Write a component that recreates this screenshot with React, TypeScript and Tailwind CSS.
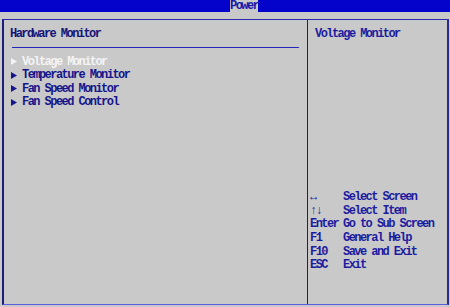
import React from "react";

const menuItems = [
  "Voltage Monitor",
  "Temperature Monitor",
  "Fan Speed Monitor",
  "Fan Speed Control",
];

const helpRows: [string, string][] = [
  ["↔", "Select Screen"],
  ["↑↓", "Select Item"],
  ["Enter", "Go to Sub Screen"],
  ["F1", "General Help"],
  ["F10", "Save and Exit"],
  ["ESC", "Exit"],
];

const font = "font-['Liberation_Mono','DejaVu_Sans_Mono',monospace] font-bold text-[12px] tracking-[-1.55px]";

export default function App() {
  return (
    <div className={`w-[450px] h-[307px] bg-[#c9c9c9] overflow-hidden ${font}`}>
      <div className="h-[12px] bg-[#0303cc] pl-[230px] flex">
        <div className="w-[28px] h-[12px] bg-[#c9c9c9] text-[#1616a8] leading-[12px] text-center">
          Power
        </div>
      </div>

      <div className="ml-[2px] mt-[7px] w-[447px] h-[286px] flex border-l-2 border-t border-r-2 border-b border-l-[#1c1c7c] border-t-[#2a2ab0] border-r-[#2a2a90] border-b-[#5c5ce0]">
        <div className="w-[303px] h-full pl-[6px] pr-[6px] pt-[6px]">
          <div className="text-[#141478] leading-[16px]">Hardware Monitor</div>
          <div className="mt-[5px] h-[1px] bg-[#2626b8] mx-[2px]"></div>
          <div className="mt-[7px] flex flex-col">
            {menuItems.map((item, key) => (
              <div
                key={key}
                className={`flex items-center h-[13.5px] ${key === 0 ? "text-[#f4f4f4]" : "text-[#16168c]"}`}
              >
                <svg width="6" height="7" viewBox="0 0 6 7" className="ml-[1px] mr-[5px]">
                  <path d="M0 0 L6 3.5 L0 7 Z" fill="currentColor" />
                </svg>
                <span>{item}</span>
              </div>
            ))}
          </div>
        </div>

        <div className="w-[1px] h-full bg-[#1c1c7c]"></div>

        <div className="flex-1 h-full flex flex-col pl-[2px] pt-[6px] pb-[32px] text-[#1c1ca0]">
          <div className="leading-[16px] pl-[5px]">Voltage Monitor</div>
          <div className="mt-auto flex flex-col">
            {helpRows.map(([k, d], key) => (
              <div key={key} className="flex h-[13.6px] items-center">
                <span className="w-[33px]">{k}</span>
                <span>{d}</span>
              </div>
            ))}
          </div>
        </div>
      </div>
    </div>
  );
}
